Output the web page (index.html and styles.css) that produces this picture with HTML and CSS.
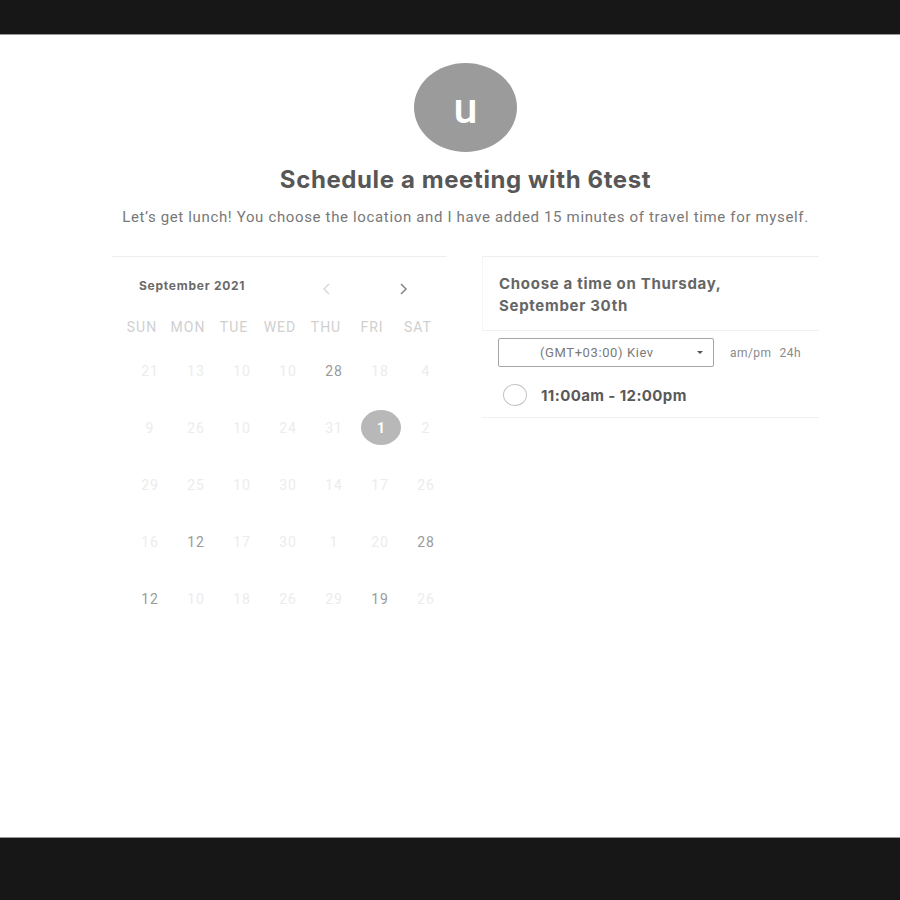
FILE: index.html
```html
<!DOCTYPE html>
<html lang="en">
<head>
<meta charset="utf-8">
<title>Schedule a meeting with 6test</title>
<link rel="stylesheet" href="styles.css">
</head>
<body>
<div class="topbar"></div>
<main class="page">
  <div class="wrap">
    <div class="avatar">u</div>
    <h1 class="title">Schedule a meeting with 6test</h1>
    <p class="desc">Let’s get lunch! You choose the location and I have added 15 minutes of travel time for myself.</p>
    <div class="cols">
      <section class="cal">
        <div class="cal-head">
          <span class="month">September 2021</span>
          <span class="nav prev">
            <svg width="10" height="14" viewBox="0 0 10 14"><path d="M7 2 L2 7 L7 12" fill="none" stroke="#d6d6d6" stroke-width="1.4"/></svg>
          </span>
          <span class="nav next">
            <svg width="10" height="14" viewBox="0 0 10 14"><path d="M3 2 L8 7 L3 12" fill="none" stroke="#8a8a8a" stroke-width="1.6"/></svg>
          </span>
        </div>
        <div class="weekdays">
          <div class="wd">SUN</div><div class="wd">MON</div><div class="wd">TUE</div><div class="wd">WED</div><div class="wd">THU</div><div class="wd">FRI</div><div class="wd">SAT</div>
        </div>
        <div class="days">
          <div class="d">21</div><div class="d">13</div><div class="d">10</div><div class="d">10</div><div class="d on">28</div><div class="d">18</div><div class="d">4</div>
          <div class="d">9</div><div class="d">26</div><div class="d">10</div><div class="d">24</div><div class="d">31</div><div class="d sel"><span>1</span></div><div class="d">2</div>
          <div class="d">29</div><div class="d">25</div><div class="d">10</div><div class="d">30</div><div class="d">14</div><div class="d">17</div><div class="d">26</div>
          <div class="d">16</div><div class="d on">12</div><div class="d">17</div><div class="d">30</div><div class="d">1</div><div class="d">20</div><div class="d on">28</div>
          <div class="d on">12</div><div class="d">10</div><div class="d">18</div><div class="d">26</div><div class="d">29</div><div class="d on">19</div><div class="d">26</div>
        </div>
      </section>
      <section class="times">
        <div class="times-head">Choose a time on Thursday,<br>September 30th</div>
        <div class="tz-row">
          <div class="select">
            <span class="select-text">(GMT+03:00) Kiev</span>
            <span class="caret"></span>
          </div>
          <div class="fmt"><span>am/pm</span><span>24h</span></div>
        </div>
        <div class="slot">
          <span class="radio"></span>
          <span class="slot-text">11:00am - 12:00pm</span>
        </div>
      </section>
    </div>
  </div>
</main>
<div class="bottombar"></div>
</body>
</html>
```
FILE: styles.css
```css
html, body {
  margin: 0;
  padding: 0;
  background: #ffffff;
  font-family: Roboto, "Liberation Sans", sans-serif;
}

.topbar {
  height: 34px;
  background: #171717;
  border-bottom: 1px solid #9a9a9a;
}

.bottombar {
  height: 62px;
  background: #171717;
  border-top: 1px solid #9a9a9a;
}

.page {
  height: 802px;
  overflow: hidden;
}

.wrap {
  width: 707px;
  margin-left: 112px;
  padding-top: 28px;
  display: flex;
  flex-direction: column;
  align-items: center;
}

.avatar {
  width: 103px;
  height: 89px;
  border-radius: 50%;
  background: #9b9b9b;
  color: #ffffff;
  font-family: Roboto, sans-serif;
  font-weight: 500;
  font-size: 43px;
  line-height: 90px;
  text-align: center;
}

.title {
  margin: 13px 0 0;
  font-family: Inter, "Liberation Sans", sans-serif;
  font-weight: 700;
  font-size: 24px;
  line-height: 30px;
  letter-spacing: 0.6px;
  color: #575757;
}

.desc {
  margin: 12px 0 0;
  font-size: 15px;
  line-height: 20px;
  letter-spacing: 0.65px;
  color: #787878;
  white-space: nowrap;
}

.cols {
  align-self: stretch;
  display: flex;
  gap: 35px;
  margin-top: 29px;
}

.cal {
  width: 335px;
  border-top: 1px solid #eeeeee;
}

.cal-head {
  display: flex;
  align-items: center;
  height: 56px;
  padding-left: 27px;
}

.month {
  font-family: Inter, "Liberation Sans", sans-serif;
  font-weight: 700;
  font-size: 12px;
  letter-spacing: 0.75px;
  color: #6a6a6a;
  width: 183px;
}

.nav {
  display: flex;
  padding-top: 8px;
}

.nav.prev {
  width: 76px;
}

.weekdays,
.days {
  display: grid;
  grid-template-columns: repeat(7, 46px);
}

.weekdays {
  padding-left: 7px;
}

.days {
  padding-left: 15px;
}

.wd {
  height: 28px;
  line-height: 29px;
  text-align: center;
  font-size: 14px;
  letter-spacing: 1px;
  color: #d0d0d0;
}

.d {
  height: 57px;
  display: flex;
  align-items: center;
  justify-content: center;
  font-size: 14px;
  color: #ececec;
  letter-spacing: 1px;
}

.d:nth-child(-n+7) {
  height: 58px;
  padding-top: 1px;
  box-sizing: border-box;
}

.d.on {
  color: #9a9a9a;
}

.d.sel span {
  width: 40px;
  height: 35px;
  border-radius: 50%;
  background: #b8b8b8;
  color: #ffffff;
  font-weight: 700;
  letter-spacing: 0;
  display: flex;
  align-items: center;
  justify-content: center;
  margin-left: 2px;
}

.times {
  width: 337px;
}

.times-head {
  border-top: 1px solid #eeeeee;
  border-left: 1px solid #f6f6f6;
  border-bottom: 1px solid #f0f0f0;
  padding: 16px 0 13px 16px;
  font-family: Inter, "Liberation Sans", sans-serif;
  font-weight: 700;
  font-size: 15px;
  line-height: 22px;
  letter-spacing: 0.7px;
  color: #666666;
}

.tz-row {
  display: flex;
  align-items: center;
  padding: 7px 0 0 16px;
}

.select {
  height: 27px;
  border: 1px solid #a5a5a5;
  border-radius: 2px;
  display: flex;
  align-items: center;
  justify-content: space-between;
  padding: 0 10px 0 41px;
  width: 163px;
}

.select-text {
  font-size: 13px;
  letter-spacing: 0.6px;
  color: #7a7a7a;
}

.caret {
  width: 0;
  height: 0;
  border-left: 3px solid transparent;
  border-right: 3px solid transparent;
  border-top: 3px solid #555555;
}

.fmt {
  margin-left: 16px;
  display: flex;
  gap: 8px;
  font-size: 12px;
  letter-spacing: 0.45px;
  color: #8a8a8a;
}

.slot {
  display: flex;
  align-items: center;
  padding: 17px 0 11px 21px;
  border-bottom: 1px solid #f0f0f0;
}

.radio {
  width: 22px;
  height: 20px;
  border: 1px solid #c4c4c4;
  border-radius: 50%;
}

.slot-text {
  margin-left: 14px;
  font-family: Inter, "Liberation Sans", sans-serif;
  font-weight: 700;
  font-size: 15px;
  letter-spacing: 0.4px;
  color: #595959;
}
```
